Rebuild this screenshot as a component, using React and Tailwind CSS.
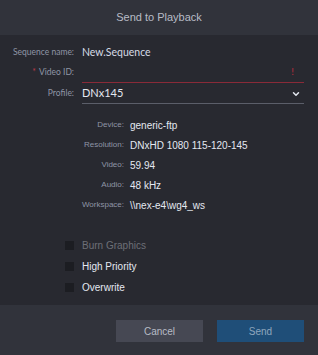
import { ChevronDown } from 'lucide-react';

const info = [
    { label: 'Device:', value: 'generic-ftp' },
    { label: 'Resolution:', value: 'DNxHD 1080 115-120-145' },
    { label: 'Video:', value: '59.94' },
    { label: 'Audio:', value: '48 kHz' },
    { label: 'Workspace:', value: '\\\\nex-e4\\wg4_ws' },
];

const checks = [
    { label: 'Burn Graphics', disabled: true },
    { label: 'High Priority' },
    { label: 'Overwrite' },
];

const App = () => {
    return (
        <div className="w-[318px] h-[355px] flex flex-col bg-[#282930] font-['Liberation_Sans',Arial,sans-serif]">
            {/* Header */}
            <div className="h-[35px] shrink-0 bg-[#31333b] flex items-center justify-center text-[11px] text-[#b8bcc6]">
                Send to Playback
            </div>

            {/* Body */}
            <div className="flex-1 flex flex-col">
                {/* Form fields */}
                <div className="flex flex-col pt-[9px] font-['Lato',sans-serif]">
                    <div className="flex items-center h-[17px]">
                        <div className="w-[74px] text-right text-[8.5px] text-[#8f95a6]">Sequence name:</div>
                        <div className="ml-[8px] text-[10.5px] text-[#d6dbe6]">New.Sequence</div>
                    </div>
                    <div className="flex items-end h-[19px] mt-[3px]">
                        <div className="w-[74px] text-right text-[8.5px] text-[#8f95a6] pb-[4px]">
                            <span className="text-[#b83a48] mr-[3px]">*</span>Video ID:
                        </div>
                        <div className="ml-[8px] w-[222px] h-[19px] border-b border-[#8a2a38] relative">
                            <span className="absolute right-[10px] top-[2px] text-[10px] leading-none text-[#b52b3c]">!</span>
                        </div>
                    </div>
                    <div className="flex items-end h-[21px]">
                        <div className="w-[74px] text-right text-[8.5px] text-[#8f95a6] pb-[4px]">Profile:</div>
                        <div className="ml-[8px] w-[222px] h-[21px] border-b border-[#5b5e69] flex items-center justify-between pb-[1px]">
                            <span className="text-[11px] text-[#e4e8f0] pt-[2px]">DNx145</span>
                            <ChevronDown size={10} strokeWidth={3.5} className="text-[#e4e8f0] mr-[3px] mt-[3px]" />
                        </div>
                    </div>
                </div>

                {/* Info */}
                <div className="flex flex-col mt-[11px]">
                    {info.map((row) => (
                        <div key={row.label} className="flex items-center h-[20px]">
                            <div className="w-[124px] text-right text-[8px] text-[#8f95a6]">{row.label}</div>
                            <div className="ml-[6px] text-[10px] text-[#e4e8f0]">{row.value}</div>
                        </div>
                    ))}
                </div>

                {/* Checkboxes */}
                <div className="flex flex-col mt-[20px]">
                    {checks.map((c) => (
                        <div key={c.label} className="flex items-center h-[21px] pl-[65px]">
                            <div className="w-[9px] h-[9px] bg-[#1c1d22]" />
                            <span className={`ml-[8px] text-[10px] ${c.disabled ? 'text-[#6d6f77]' : 'text-[#e4e8f0]'}`}>
                                {c.label}
                            </span>
                        </div>
                    ))}
                </div>
            </div>

            {/* Footer */}
            <div className="h-[50px] shrink-0 bg-[#31333b] flex items-start justify-end gap-[14px] pr-[14px] pt-[15px]">
                <button className="w-[87px] h-[22px] bg-[#464853] text-[10px] text-[#b8bcc6]">Cancel</button>
                <button className="w-[87px] h-[22px] bg-[#1f4e78] text-[10px] text-[#8fa6bd]">Send</button>
            </div>
        </div>
    );
};

export default App;
